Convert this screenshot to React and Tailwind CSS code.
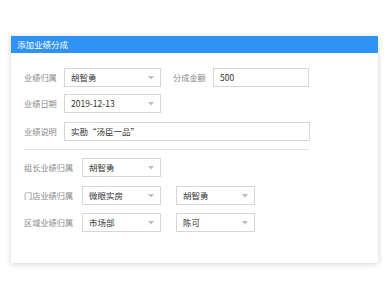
const F = { fontFamily: '"Noto Sans CJK SC", "Noto Sans", sans-serif' };

function Arrow() {
  return (
    <svg width="6" height="4" viewBox="0 0 6 4" className="shrink-0">
      <path d="M0 0 L6 0 L3 3.5 Z" fill="#bdbdbd" />
    </svg>
  );
}

function Select({ value, w }) {
  return (
    <div className={`flex items-center justify-between h-[19px] border border-[#d6d6d6] bg-white pl-[6px] pr-[6px] ${w}`}>
      <span className="text-[8.5px] text-[#333] leading-none">{value}</span>
      <Arrow />
    </div>
  );
}

function Input({ value, w }) {
  return (
    <div className={`flex items-center h-[19px] border border-[#d6d6d6] bg-white pl-[6px] ${w}`}>
      <span className="text-[8.5px] text-[#333] leading-none">{value}</span>
    </div>
  );
}

function Label({ children, w }) {
  return <span className={`text-[8.2px] text-[#888] leading-none shrink-0 ${w}`}>{children}</span>;
}

export default function App() {
  return (
    <div className="w-[389px] h-[300px] bg-white pt-[36px] pl-[11px]" style={F}>
      <div className="w-[367px] h-[227px] bg-white shadow-[0_1px_6px_rgba(0,0,0,0.18)]">
        <div className="h-[17px] bg-[#2f93f3] flex items-center pl-[6px]">
          <span className="text-[8.5px] text-white leading-none">添加业绩分成</span>
        </div>
        <div className="pl-[13px] pt-[15px]">
          <div className="flex items-center">
            <Label w="w-[40px]">业绩归属</Label>
            <Select value="胡智勇" w="w-[97px]" />
            <Label w="w-[40px] ml-[12px]">分成金额</Label>
            <Input value="500" w="w-[96px]" />
          </div>
          <div className="flex items-center mt-[7px]">
            <Label w="w-[40px]">业绩日期</Label>
            <Select value="2019-12-13" w="w-[97px]" />
          </div>
          <div className="flex items-center mt-[9px]">
            <Label w="w-[40px]">业绩说明</Label>
            <Input value="实勘“汤臣一品”" w="w-[246px]" />
          </div>
          <div className="w-[285px] h-px bg-[#e3e3e3] mt-[8px]" />
          <div className="flex items-center mt-[8px]">
            <Label w="w-[58px]">组长业绩归属</Label>
            <Select value="胡智勇" w="w-[79px]" />
          </div>
          <div className="flex items-center mt-[9px]">
            <Label w="w-[58px]">门店业绩归属</Label>
            <Select value="微眼实房" w="w-[79px]" />
            <div className="w-[15px]" />
            <Select value="胡智勇" w="w-[79px]" />
          </div>
          <div className="flex items-center mt-[8px]">
            <Label w="w-[58px]">区域业绩归属</Label>
            <Select value="市场部" w="w-[79px]" />
            <div className="w-[15px]" />
            <Select value="陈可" w="w-[79px]" />
          </div>
        </div>
      </div>
    </div>
  );
}
